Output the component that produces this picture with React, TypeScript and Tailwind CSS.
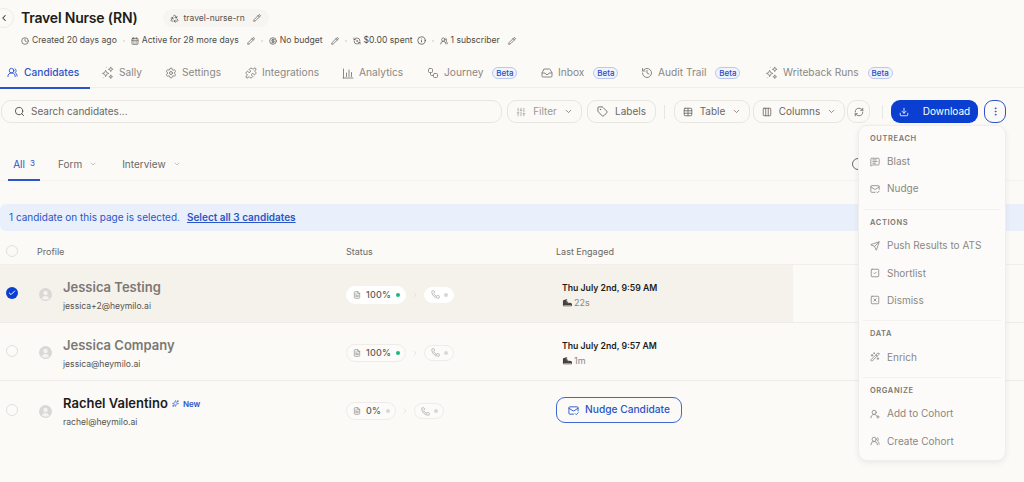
import {
  CalendarDays, Check, ChevronDown, ChevronLeft, ChevronRight, CircleDollarSign, Clock, Columns3,
  Download, EllipsisVertical, FileText, History, Inbox, Info, MailCheck, MessageSquareText, Pencil, Phone, Puzzle, Recycle, RefreshCcwDot, RefreshCw, Search,
  Send, Settings, SlidersVertical, SquareCheck, SquareX, Table, Tag, UserRoundPlus, UsersRound, WandSparkles, Sparkles, Workflow,
} from "lucide-react";
import { PiSneakerFill } from "react-icons/pi";
import type { ReactNode } from "react";

function StarCluster() {
  return (
    <svg width="13" height="13" viewBox="0 0 14 14" fill="none" stroke="currentColor" strokeWidth="1" strokeLinejoin="round">
      <path d="M5 4.5 6 7l2.5 1L6 9l-1 2.5L4 9 1.5 8 4 7z" />
      <path d="M10.5 1 11.2 2.8 13 3.5 11.2 4.2 10.5 6 9.8 4.2 8 3.5 9.8 2.8z" />
      <path d="M10.5 9.5 11 11 12.5 11.5 11 12 10.5 13.5 10 12 8.5 11.5 10 11z" />
      <path d="M2 12.5h.5M5.5 1.5h.5" />
    </svg>
  );
}

function BarsIcon() {
  return (
    <svg width="12" height="12" viewBox="0 0 12 12" fill="none" stroke="currentColor" strokeWidth="1" strokeLinecap="round">
      <path d="M1 11h10M1.5 2v9M4.5 6v3.5M7 3v6.5M9.5 5.5v4" />
    </svg>
  );
}

function Avatar() {
  return (
    <svg width="13" height="13" viewBox="0 0 13 13">
      <circle cx="6.5" cy="6.5" r="6.5" fill="#dad8d6" />
      <circle cx="6.5" cy="5" r="2.2" fill="#f4f3f1" />
      <path d="M2.8 10.6c.6-1.9 2-2.6 3.7-2.6s3.1.7 3.7 2.6c-2 1.5-5.4 1.5-7.4 0z" fill="#f4f3f1" />
    </svg>
  );
}

function BetaBadge() {
  return (
    <span className="ml-[9px] flex h-[12px] w-[25px] items-center justify-center rounded-full border border-[#b9c8ef] bg-[#f1f4fc] text-[8px] font-medium text-[#1f4fc4]">
      Beta
    </span>
  );
}

const TABS = [
  { label: "Sally", icon: <StarCluster />, w: "w-[64px]" },
  { label: "Settings", icon: <Settings size={12} />, w: "w-[80px]" },
  { label: "Integrations", icon: <Puzzle size={12} />, w: "w-[97px]" },
  { label: "Analytics", icon: <BarsIcon />, w: "w-[85px]" },
  { label: "Journey", icon: <Workflow size={12} />, beta: true, w: "w-[114px]" },
  { label: "Inbox", icon: <Inbox size={12} />, beta: true, w: "w-[100px]" },
  { label: "Audit Trail", icon: <History size={12} />, beta: true, w: "w-[124px]" },
  { label: "Writeback Runs", icon: <StarCluster />, beta: true, w: "w-[150px]" },
];

function Meta({ icon, text, edit }: { icon: ReactNode; text: string; edit?: boolean }) {
  return (
    <span className="flex items-center gap-[3px] text-[#4f4c48]">
      {icon}
      <span>{text}</span>
      {edit && <Pencil size={8} className="ml-[5px]" />}
    </span>
  );
}

function Dot() {
  return <span className="mx-[6px] h-[2px] w-[2px] rounded-full bg-[#dcdad5]" />;
}

function ToolButton({ children, w }: { children: ReactNode; w: string }) {
  return (
    <button className={`flex h-[23px] items-center justify-center gap-[7px] rounded-[9px] border border-[#e8e6e1] bg-[#fbfaf7] text-[10px] text-[#6b6864] ${w}`}>
      {children}
    </button>
  );
}

function StatusPills({ pct, done, filled }: { pct: string; done: boolean; filled?: boolean }) {
  const bg = filled ? "bg-white border-white" : "bg-[#fcfbf9] border-[#eeece8]";
  return (
    <div className="flex items-center pt-[2px]">
      <div className={`flex h-[18px] items-center rounded-full border pl-[6px] pr-[5px] ${bg}`}>
        <FileText size={8} className="text-[#8a8883]" />
        <span className="ml-[5px] text-[9px] font-medium tracking-[0.2px] text-[#5f5c58]">{pct}</span>
        <span className={`ml-[5px] h-[4px] w-[4px] rounded-full ${done ? "bg-[#1fb57f]" : "bg-[#d9d7d3]"}`} />
      </div>
      <ChevronRight size={8} className="mx-[5px] text-[#dedcd8]" />
      <div className={`flex h-[16px] items-center rounded-full border pl-[6px] pr-[5px] ${bg}`}>
        <Phone size={9} strokeWidth={1.4} className="text-[#8a8883]" />
        <span className="ml-[4px] h-[4px] w-[4px] rounded-full bg-[#d9d7d3]" />
      </div>
    </div>
  );
}

function Row({
  name, email, selected, muted, isNew, children, status,
}: {
  name: string; email: string; selected?: boolean; muted?: boolean; isNew?: boolean; children: ReactNode; status: ReactNode;
}) {
  return (
    <div className="relative flex h-[58px] items-center border-b border-[#eeece8] last:border-b-0">
      {selected && <div className="absolute inset-y-0 left-0 w-[793px] bg-[#f5f2ec]" />}
      <div className="relative flex w-full items-center">
        <div className="mb-[1px] flex w-[39px] justify-start pl-[6px]">
          {selected ? (
            <span className="flex h-[12px] w-[12px] items-center justify-center rounded-full bg-[#0a3fd1]">
              <Check size={8} strokeWidth={3} className="text-white" />
            </span>
          ) : (
            <span className="h-[12px] w-[12px] rounded-full border border-[#e2e0dc] bg-[#fcfbf9]" />
          )}
        </div>
        <div className="flex w-[24px] items-center pt-[2px]">
          <Avatar />
        </div>
        <div className="flex w-[283px] flex-col gap-[4px] pt-[3px]">
          <div className="flex items-center">
            <span className={`text-[13px] leading-[17px] font-semibold ${muted ? "text-[#7b7873]" : "text-[#1d1c1a]"}`}>{name}</span>
            {isNew && (
              <span className="ml-[4px] flex items-center gap-[4px] text-[8px] font-semibold text-[#2a55c8]">
                <Sparkles size={7} />
                New
              </span>
            )}
          </div>
          <span className="text-[8.6px] leading-[12px] text-[#55524d]">{email}</span>
        </div>
        <div className="w-[210px]">{status}</div>
        <div>{children}</div>
      </div>
    </div>
  );
}

function Engaged({ date, dur }: { date: string; dur: string }) {
  return (
    <div className="flex flex-col gap-[3px] pl-[6px] pt-[3px]">
      <span className="text-[8.7px] leading-[12px] font-semibold text-[#1d1c1a]">{date}</span>
      <span className="flex items-center gap-[2px] text-[9px] leading-[12px] text-[#8a8883]">
        <PiSneakerFill size={10} className="text-[#45423e]" />
        {dur}
      </span>
    </div>
  );
}

const MENU = [
  { title: "OUTREACH", items: [["Blast", <MessageSquareText size={10} />], ["Nudge", <MailCheck size={10} />]] },
  { title: "ACTIONS", items: [["Push Results to ATS", <Send size={10} />], ["Shortlist", <SquareCheck size={10} />], ["Dismiss", <SquareX size={10} />]] },
  { title: "DATA", items: [["Enrich", <WandSparkles size={10} />]] },
  { title: "ORGANIZE", items: [["Add to Cohort", <UserRoundPlus size={10} />], ["Create Cohort", <UsersRound size={10} />]] },
] as const;

export default function App() {
  return (
    <div className="relative h-[482px] w-[1024px] overflow-hidden bg-[#fbfaf7] font-['Inter',sans-serif]">
      {/* title */}
      <div className="flex h-[31px] items-end">
        <button className="mb-[3px] ml-[-6px] flex h-[20px] w-[20px] items-center justify-center rounded-full border border-[#eeece8]">
          <ChevronLeft size={10} strokeWidth={2.5} className="text-[#33312e]" />
        </button>
        <h1 className="ml-[7px] text-[14px] leading-[26px] font-semibold tracking-[-0.2px] text-[#1d1c1a]">Travel Nurse (RN)</h1>
        <div className="mb-[4px] ml-[25px] flex h-[18px] w-[106px] items-center rounded-full bg-[#f6f5f2] pl-[7px] text-[8.5px] text-[#55524d]">
          <Recycle size={9} />
          <span className="ml-[5px]">travel-nurse-rn</span>
          <Pencil size={8} className="ml-[8px]" />
        </div>
      </div>
      {/* meta */}
      <div className="ml-[21px] flex h-[18px] items-center pt-[1px] text-[8.6px] leading-none">
        <Meta icon={<Clock size={8} />} text="Created 20 days ago" />
        <Dot />
        <Meta icon={<CalendarDays size={8} />} text="Active for 28 more days" edit />
        <Dot />
        <Meta icon={<CircleDollarSign size={8} />} text="No budget" edit />
        <Dot />
        <Meta icon={<RefreshCcwDot size={8} />} text="$0.00 spent" />
        <Info size={9} className="ml-[4px] text-[#4f4c48]" />
        <Dot />
        <Meta icon={<UsersRound size={8} />} text="1 subscriber" edit />
      </div>
      {/* tabs */}
      <div className="mt-[10px] flex h-[29px] items-center border-b border-[#f1efeb]">
        <div className="relative flex h-[29px] w-[101px] items-center">
          <div className="flex items-center gap-[6px] pl-[7px] text-[10.2px] font-medium text-[#2a55c8]">
            <UsersRound size={11} />
            Candidates
          </div>
          <span className="absolute bottom-[-1px] left-0 h-[2px] w-[90px] bg-[#2a55c8]" />
        </div>
        {TABS.map((t) => (
          <div key={t.label} className={`flex items-center text-[10.2px] text-[#8a8883] ${t.w}`}>
            <span className="mr-[5px]">{t.icon}</span>
            {t.label}
            {t.beta && <BetaBadge />}
          </div>
        ))}
      </div>
      {/* toolbar */}
      <div className="mt-[12px] flex h-[23px] items-center pl-[1px]">
        <div className="flex h-[23px] w-[501px] items-center rounded-[10px] border border-[#e8e6e1] pl-[12px] text-[10px] text-[#6b6864]">
          <Search size={11} className="text-[#55524d]" />
          <span className="ml-[6px]">Search candidates...</span>
        </div>
        <div className="ml-[5px]">
          <ToolButton w="w-[75px]">
            <SlidersVertical size={10} className="text-[#a5a3a0]" />
            <span className="text-[#9a9894]">Filter</span>
            <ChevronDown size={9} />
          </ToolButton>
        </div>
        <div className="ml-[5px]">
          <ToolButton w="w-[69px]">
            <Tag size={11} />
            Labels
          </ToolButton>
        </div>
        <span className="ml-[8px] mr-[9px] h-[14px] w-px bg-[#e8e6e1]" />
        <ToolButton w="w-[76px]">
          <Table size={10} />
          Table
          <ChevronDown size={9} />
        </ToolButton>
        <div className="ml-[3px]">
          <ToolButton w="w-[92px]">
            <Columns3 size={10} />
            Columns
            <ChevronDown size={9} />
          </ToolButton>
        </div>
        <div className="ml-[2px]">
          <ToolButton w="w-[23px]">
            <RefreshCw size={10} />
          </ToolButton>
        </div>
        <span className="ml-[12px] mr-[8px] h-[14px] w-px bg-[#e8e6e1]" />
        <button className="flex h-[23px] w-[87px] items-center justify-center gap-[14px] rounded-[9px] bg-[#0a3fd1] text-[10px] text-white">
          <Download size={10} />
          Download
        </button>
        <button className="ml-[6px] flex h-[23px] w-[22px] items-center justify-center rounded-[9px] border border-[#2a55c8] text-[#2a55c8]">
          <EllipsisVertical size={11} />
        </button>
      </div>
      {/* subtabs */}
      <div className="mt-[24px] flex h-[34px] items-stretch border-b border-[#f4f2ee] pt-[1px] text-[10px]">
        <div className="relative ml-[8px] flex w-[32px] items-center justify-center gap-[5px] text-[#2a55c8]">
          All <span className="mb-[2px] text-[8px]">3</span>
          <span className="absolute bottom-[-1px] left-0 h-[2px] w-[32px] bg-[#2a55c8]" />
        </div>
        <div className="ml-[18px] flex items-center gap-[7px] text-[#6b6864]">
          Form <ChevronDown size={8} className="text-[#aaa8a4]" />
        </div>
        <div className="ml-[25px] flex items-center gap-[7px] text-[#6b6864]">
          Interview <ChevronDown size={8} className="text-[#aaa8a4]" />
        </div>
        <span className="ml-auto mr-[160px] mt-[10px] h-[12px] w-[12px] rounded-full border border-[#6b6864]" />
      </div>
      {/* banner */}
      <div className="mt-[23px] flex h-[27px] items-center rounded-l-[6px] bg-[#e9effb] pl-[9px] text-[10px] text-[#2a55c8]">
        1 candidate on this page is selected.
        <span className="ml-[7px] font-semibold underline">Select all 3 candidates</span>
      </div>
      {/* table */}
      <div className="flex h-[34px] items-center border-b border-[#f1efeb] pt-[8px] text-[9px] text-[#6b6864]">
        <span className="mb-[2px] ml-[6px] h-[12px] w-[12px] rounded-full border border-[#e2e0dc]" />
        <span className="ml-[19px] w-[309px]">Profile</span>
        <span className="w-[210px]">Status</span>
        <span>Last Engaged</span>
      </div>
      <div>
        <Row name="Jessica Testing" email="jessica+2@heymilo.ai" selected muted status={<StatusPills pct="100%" done filled />}>
          <Engaged date="Thu July 2nd, 9:59 AM" dur="22s" />
        </Row>
        <Row name="Jessica Company" email="jessica@heymilo.ai" muted status={<StatusPills pct="100%" done />}>
          <Engaged date="Thu July 2nd, 9:57 AM" dur="1m" />
        </Row>
        <Row name="Rachel Valentino" email="rachel@heymilo.ai" isNew status={<StatusPills pct="0%" done={false} />}>
          <button className="flex h-[26px] w-[126px] items-center justify-center gap-[6px] rounded-[9px] border border-[#3f68d0] text-[10.2px] font-medium text-[#2a55c8]">
            <MailCheck size={11} />
            Nudge Candidate
          </button>
        </Row>
      </div>
      {/* menu */}
      <div className="absolute left-[858px] top-[125px] w-[148px] rounded-[9px] border border-[#f0eeea] bg-[#fcfbf9] px-[4px] pb-[5px] shadow-[0_2px_6px_rgba(0,0,0,0.07)]">
        {MENU.map((s, i) => (
          <div key={s.title} className={i > 0 ? "border-t border-[#f4f2ee]" : ""}>
            <div className="h-[22px] pl-[7px] pt-[8px] text-[7.5px] leading-[10px] font-semibold tracking-[0.6px] text-[#7b7873]">{s.title}</div>
            {s.items.map(([label, icon]) => (
              <div key={label} className="flex h-[27.3px] items-center gap-[7px] pl-[7px] text-[10px] text-[#8a8883]">
                {icon}
                {label}
              </div>
            ))}
            {i < MENU.length - 1 && <div className="h-[6.5px]" />}
          </div>
        ))}
      </div>
    </div>
  );
}
